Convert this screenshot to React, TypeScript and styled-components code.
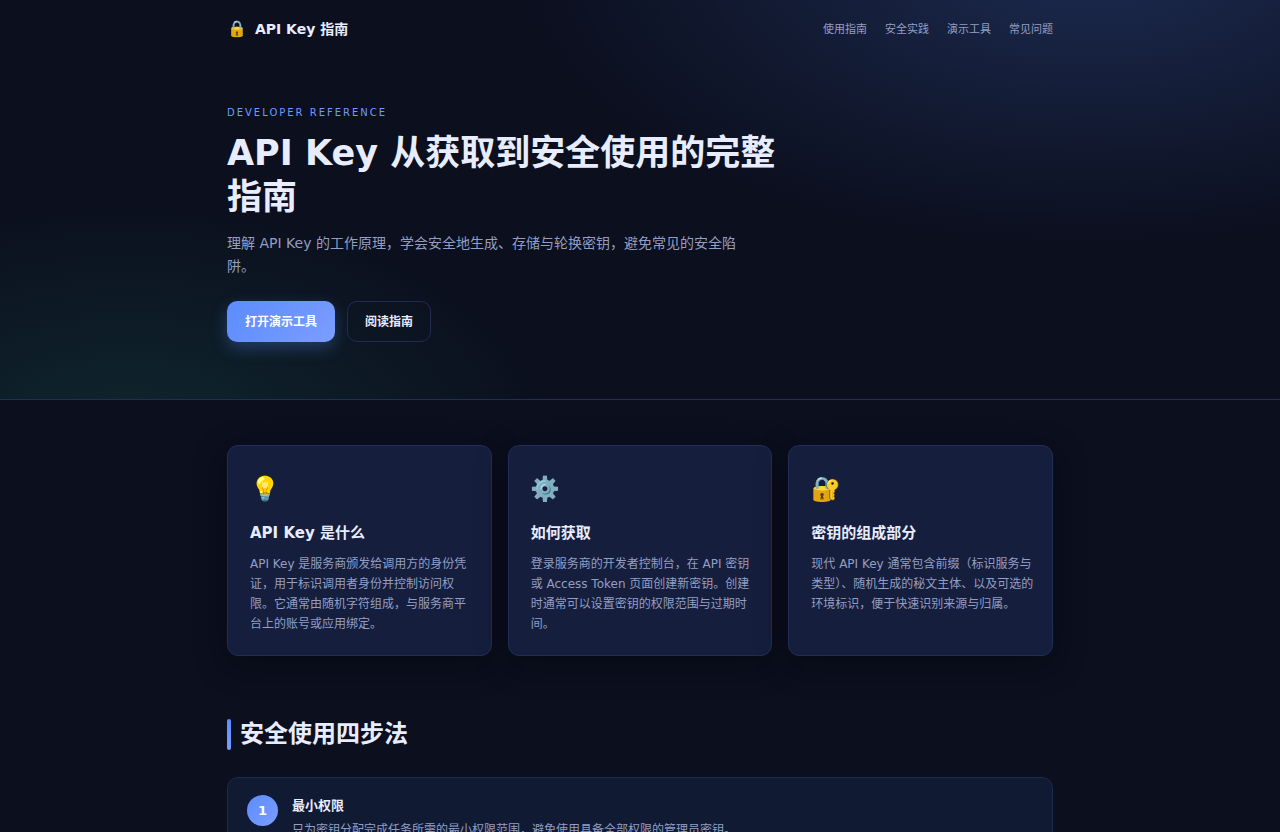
import React from "react";
import styled, { createGlobalStyle } from "styled-components";

const GlobalStyle = createGlobalStyle`
  *, *::before, *::after { box-sizing: border-box; }
  body {
    margin: 0;
    background: #0b0f1e;
    color: #e8ecff;
    font-family: "DejaVu Sans", "Noto Sans CJK SC", "Noto Color Emoji", sans-serif;
    font-size: 12px;
  }
  h1, h2, h3, p, ul, ol { margin: 0; padding: 0; }
`;

const Container = styled.div`
  width: 100%;
  max-width: 866px;
  margin: 0 auto;
  padding: 0 20px;
`;

const Hero = styled.header`
  border-bottom: 1px solid #212e58;
  background:
    radial-gradient(960px 480px at 85% -10%, rgba(91, 140, 255, 0.22), transparent 60%),
    radial-gradient(720px 400px at 10% 110%, rgba(45, 200, 150, 0.13), transparent 60%);
`;

const TopBar = styled.div`
  display: flex;
  align-items: center;
  justify-content: space-between;
  height: 56px;
`;

const Brand = styled.div`
  display: flex;
  align-items: center;
  gap: 8px;
  font-size: 14px;
  font-weight: 700;
`;

const BrandIcon = styled.span`
  padding-top: 2px;
  font-size: 16px;
  font-weight: 400;
  line-height: 22px;
`;

const Nav = styled.nav`
  display: flex;
  gap: 18px;
`;

const NavLink = styled.a`
  color: #949ec4;
  font-size: 11px;
  text-decoration: none;
`;

const HeroBody = styled.div`
  padding: 49px 0 57px;
`;

const Eyebrow = styled.p`
  color: #6f9bff;
  font-size: 10px;
  line-height: 16px;
  letter-spacing: 2px;
`;

const HeroTitle = styled.h1`
  max-width: 576px;
  margin-top: 10px;
  font-size: 35px;
  line-height: 44px;
`;

const Lead = styled.p`
  max-width: 512px;
  margin-top: 13px;
  color: #949ec4;
  font-size: 14px;
  line-height: 23px;
`;

const Actions = styled.div`
  display: flex;
  gap: 12px;
  margin-top: 23px;
`;

const Button = styled.button<{ $primary?: boolean }>`
  height: 41px;
  padding: 0 17px 2px;
  border: 1px solid ${(p) => (p.$primary ? "transparent" : "#212b52")};
  border-radius: 10px;
  background: ${(p) => (p.$primary ? "linear-gradient(135deg, #5b8cff, #7c9dff) border-box" : "transparent")};
  box-shadow: ${(p) => (p.$primary ? "0 6px 16px rgba(91, 140, 255, 0.3)" : "none")};
  color: ${(p) => (p.$primary ? "#ffffff" : "#e8ecff")};
  font-family: inherit;
  font-size: 12px;
  font-weight: 700;
  cursor: pointer;
`;

const CardGrid = styled.section`
  display: grid;
  grid-template-columns: repeat(3, 1fr);
  gap: 16px;
  margin-top: 45px;
`;

const Card = styled.article`
  padding: 22px 16px 21px 22px;
  border: 1px solid #212e58;
  border-radius: 11px;
  background: #151e3c;
  box-shadow: 0 8px 32px rgba(0, 0, 0, 0.35);
`;

const CardIcon = styled.div`
  font-size: 24px;
  line-height: 42px;
`;

const CardTitle = styled.h2`
  margin-top: 11px;
  font-size: 15px;
  line-height: 24px;
`;

const CardText = styled.p`
  margin-top: 9px;
  color: #949ec4;
  font-size: 12px;
  line-height: 20px;
`;

const SectionTitle = styled.h2`
  display: flex;
  align-items: center;
  gap: 9px;
  margin-top: 59px;
  font-size: 24px;
  line-height: 38px;

  &::before {
    content: "";
    width: 4px;
    height: 31px;
    border-radius: 2px;
    background: linear-gradient(180deg, #5b8cff, #7c9dff);
  }
`;

const Steps = styled.ol`
  margin-top: 24px;
  margin-bottom: 45px;
  list-style: none;
`;

const Step = styled.li`
  display: flex;
  gap: 14px;
  padding: 17px 19px;
  border: 1px solid #1d2b4f;
  border-radius: 11px;
  background: #101a32;
`;

const StepNumber = styled.span`
  display: flex;
  flex: none;
  align-items: center;
  justify-content: center;
  width: 31px;
  height: 31px;
  border-radius: 50%;
  background: linear-gradient(135deg, #5b8cff, #7c9dff);
  color: #ffffff;
  font-size: 13px;
  font-weight: 700;
`;

const StepTitle = styled.h3`
  font-size: 13px;
  line-height: 21px;
`;

const StepText = styled.p`
  margin-top: 4px;
  color: #949ec4;
  font-size: 12px;
  line-height: 20px;
`;

const links = [
  { label: "使用指南", href: "#guide" },
  { label: "安全实践", href: "#practice" },
  { label: "演示工具", href: "#demo" },
  { label: "常见问题", href: "#faq" },
];

const cards = [
  {
    icon: "💡",
    title: "API Key 是什么",
    text: "API Key 是服务商颁发给调用方的身份凭证，用于标识调用者身份并控制访问权限。它通常由随机字符组成，与服务商平台上的账号或应用绑定。",
  },
  {
    icon: "⚙️",
    title: "如何获取",
    text: "登录服务商的开发者控制台，在 API 密钥或 Access Token 页面创建新密钥。创建时通常可以设置密钥的权限范围与过期时间。",
  },
  {
    icon: "🔐",
    title: "密钥的组成部分",
    text: "现代 API Key 通常包含前缀（标识服务与类型）、随机生成的秘文主体、以及可选的环境标识，便于快速识别来源与归属。",
  },
];

const steps = [
  {
    title: "最小权限",
    text: "只为密钥分配完成任务所需的最小权限范围，避免使用具备全部权限的管理员密钥。",
  },
];

export default function App() {
  return (
    <>
      <GlobalStyle />
      <Hero>
        <Container>
          <TopBar>
            <Brand>
              <BrandIcon>🔒</BrandIcon>
              API Key 指南
            </Brand>
            <Nav>
              {links.map((link) => (
                <NavLink key={link.href} href={link.href}>
                  {link.label}
                </NavLink>
              ))}
            </Nav>
          </TopBar>
          <HeroBody>
            <Eyebrow>DEVELOPER REFERENCE</Eyebrow>
            <HeroTitle>API Key 从获取到安全使用的完整指南</HeroTitle>
            <Lead>
              理解 API Key 的工作原理，学会安全地生成、存储与轮换密钥，避免常见的安全陷阱。
            </Lead>
            <Actions>
              <Button type="button" $primary>
                打开演示工具
              </Button>
              <Button type="button">阅读指南</Button>
            </Actions>
          </HeroBody>
        </Container>
      </Hero>
      <Container as="main">
        <CardGrid>
          {cards.map((card) => (
            <Card key={card.title}>
              <CardIcon>{card.icon}</CardIcon>
              <CardTitle>{card.title}</CardTitle>
              <CardText>{card.text}</CardText>
            </Card>
          ))}
        </CardGrid>
        <section>
          <SectionTitle>安全使用四步法</SectionTitle>
          <Steps>
            {steps.map((step, index) => (
              <Step key={step.title}>
                <StepNumber>{index + 1}</StepNumber>
                <div>
                  <StepTitle>{step.title}</StepTitle>
                  <StepText>{step.text}</StepText>
                </div>
              </Step>
            ))}
          </Steps>
        </section>
      </Container>
    </>
  );
}
